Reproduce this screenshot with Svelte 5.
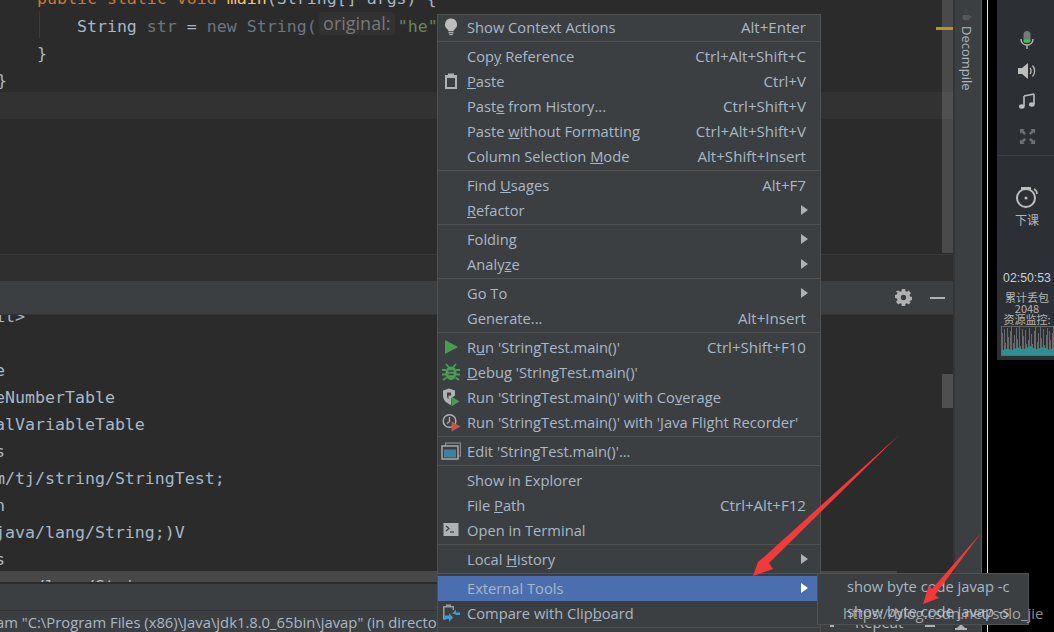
<script lang="ts">
  type Row = {
    label?: string;
    key?: number;
    shortcut?: string;
    icon?: string;
    more?: boolean;
    active?: boolean;
    sep?: boolean;
  };

  const rows: Row[] = [
    { label: "Show Context Actions", shortcut: "Alt+Enter", icon: "bulb" },
    { sep: true },
    { label: "Copy Reference", key: 3, shortcut: "Ctrl+Alt+Shift+C" },
    { label: "Paste", key: 0, shortcut: "Ctrl+V", icon: "clip" },
    { label: "Paste from History...", key: 4, shortcut: "Ctrl+Shift+V" },
    { label: "Paste without Formatting", key: 6, shortcut: "Ctrl+Alt+Shift+V" },
    { label: "Column Selection Mode", key: 17, shortcut: "Alt+Shift+Insert" },
    { sep: true },
    { label: "Find Usages", key: 5, shortcut: "Alt+F7" },
    { label: "Refactor", key: 0, more: true },
    { sep: true },
    { label: "Folding", more: true },
    { label: "Analyze", key: 5, more: true },
    { sep: true },
    { label: "Go To", more: true },
    { label: "Generate...", shortcut: "Alt+Insert" },
    { sep: true },
    { label: "Run 'StringTest.main()'", key: 1, shortcut: "Ctrl+Shift+F10", icon: "run" },
    { label: "Debug 'StringTest.main()'", key: 0, icon: "debug" },
    { label: "Run 'StringTest.main()' with Coverage", key: 31, icon: "cover" },
    { label: "Run 'StringTest.main()' with 'Java Flight Recorder'", icon: "flight" },
    { sep: true },
    { label: "Edit 'StringTest.main()'...", icon: "edit" },
    { sep: true },
    { label: "Show in Explorer" },
    { label: "File Path", key: 5, shortcut: "Ctrl+Alt+F12" },
    { label: "Open in Terminal", icon: "term" },
    { sep: true },
    { label: "Local History", key: 6, more: true },
    { sep: true },
    { label: "External Tools", more: true, active: true },
    { label: "Compare with Clipboard", key: 17, icon: "compare" },
    { sep: true }
  ];

  const consoleLines = [
    "e",
    "eNumberTable",
    "alVariableTable",
    "s",
    "m/tj/string/StringTest;",
    "n",
    "java/lang/String;)V",
    "s",
    "    /lang/Strin"
  ];

  const bars = [
    22, 26, 12, 27, 18, 24, 28, 12, 20, 27, 16, 28, 9, 26, 19, 25, 11, 15, 27, 21, 11, 24, 28, 13, 22, 28, 17, 26,
    10, 20, 27, 24, 15, 22, 28, 14
  ];
</script>

{#snippet icon(name: string)}
  <svg class="menu-icon" viewBox="0 0 20 20" width="20" height="20" aria-hidden="true">
    {#if name === "bulb"}
      <path d="M10 1.500a6 6 0 0 0-3.600 10.800c.7.6 1 1.200 1 1.900h5.200c0-.7.3-1.300 1-1.900A6 6 0 0 0 10 1.500z" fill="#bdbdbd" />
      <rect x="7.500" y="15" width="5" height="1.400" fill="#a8a8a8" />
      <rect x="8.200" y="17" width="3.600" height="1.200" fill="#a8a8a8" />
    {:else if name === "clip"}
      <path fill-rule="evenodd" d="M4 4h3V2.500h6V4h3v14H4zM6 7v9h8V7z" fill="#afb1b3" />
    {:else if name === "run"}
      <path d="M4 3l13 7-13 7z" fill="#499c54" />
    {:else if name === "debug"}
      <path d="M10 4.500c3.200 0 5.500 2.800 5.500 6.500s-2.300 7-5.500 7-5.500-3.300-5.500-7 2.300-6.500 5.500-6.500z" fill="#499c54" />
      <path d="M5 2l3 3.500M15 2l-3 3.500M1 8h4M19 8h-4M1 12.500h4M19 12.500h-4M2 18l3.500-2.500M18 18l-3.500-2.500" stroke="#499c54" stroke-width="1.800" fill="none" />
      <path d="M7.500 9h5M7.500 12.500h5" stroke="#3c3f41" stroke-width="1.400" />
    {:else if name === "cover"}
      <path d="M2 3.500l6-2 6 2v5l-4 3v6.500C5 16 2 13 2 8.500z" fill="#afb1b3" />
      <path d="M6 5.500h4v3H7.500v4C6 11 6 9 6 8z" fill="#3c3f41" />
      <path d="M10.500 9.500l8 5-8 5z" fill="#499c54" />
    {:else if name === "flight"}
      <circle cx="8.500" cy="9" r="6.300" fill="none" stroke="#afb1b3" stroke-width="1.500" />
      <path d="M8.500 5v4.500l-2.500 2" fill="none" stroke="#afb1b3" stroke-width="1.300" />
      <path d="M10.500 9.500l9 5-9 5z" fill="#c75450" />
    {:else if name === "edit"}
      <rect x="4.500" y="2" width="15" height="13" fill="none" stroke="#8c8e90" stroke-width="1.200" />
      <rect x="1" y="5" width="16" height="13" fill="#3c3f41" stroke="#afb1b3" stroke-width="1.400" />
      <rect x="3" y="8.500" width="12" height="8" fill="#40829e" />
    {:else if name === "term"}
      <rect x="2.500" y="3" width="15" height="13" fill="#afb1b3" />
      <path d="M5 6l3 2.500L5 11" fill="none" stroke="#3c3f41" stroke-width="1.200" />
      <path d="M9 12h4" stroke="#3c3f41" stroke-width="1.200" />
    {:else if name === "compare"}
      <path d="M2 3h3V1.500h5V3h3v4h-1.500V4.500h-8V15H5v1.500H2z" fill="#9a9c9e" />
      <path d="M19 9.500h-4V6.500l-4 4.500h3.500v1H19zM3.500 12.500H8V10l4 4.500-4 4.500v-3H3.500z" fill="#389fd6" />
    {/if}
  </svg>
{/snippet}

{#snippet caption(row: Row)}
  {#if row.key !== undefined}
    {row.label?.slice(0, row.key)}<u>{row.label?.[row.key]}</u>{row.label?.slice(row.key + 1)}
  {:else}
    {row.label}
  {/if}
{/snippet}

<div class="screen">
  <div class="ide">
    <div class="main">
      <div class="editor">
        <div class="caret-row"></div>
        <div class="guide"></div>
        <pre class="code"><span class="kw">    public static void </span><span class="fn">main</span>(String[] args) &#123;
        String <span class="dim">str</span> = <span class="dimblue">new String(</span><span class="hint">original:</span><span class="str">"he"</span>
    &#125;
&#125;</pre>
        <div class="editor-track"></div>
        <div class="warn-mark"></div>
      </div>
      <div class="tab-gap"></div>
      <div class="tool-header">
        <svg class="gear" viewBox="0 0 16 16" width="17" height="17" aria-hidden="true">
          <path fill-rule="evenodd" fill="#afb1b3" d="M6.500 0h3l.4 2.100 1.300.6L13 1.500 15 4l-1.300 1.700.4 1.300 1.900.6v2.800l-1.900.6-.4 1.300L15 12l-2 2.500-1.800-1.200-1.300.6L9.500 16h-3l-.4-2.100-1.300-.6L3 14.500 1 12l1.300-1.700-.4-1.300L0 8.400V5.600l1.900-.6.4-1.300L1 2l2-.5 1.800 1.200 1.300-.6zM8 5.500a2.500 2.500 0 1 0 0 5 2.500 2.500 0 0 0 0-5z" />
        </svg>
        <div class="minimize"></div>
      </div>
      <div class="console">
        <pre class="output">{consoleLines.join("\n")}</pre>
        <div class="console-top">it&gt;</div>
        <div class="console-thumb"></div>
        <div class="hscroll"></div>
      </div>
      <div class="blank-bar"></div>
      <div class="status">
        <span class="status-text">am "C:\Program Files (x86)\Java\jdk1.8.0_65bin\javap" (in directory</span>
        <span class="status-dot"></span>
        <span class="status-label">Repeat</span>
        <span class="status-bar"></span>
      </div>
    </div>
    <aside class="side-strip">
      <svg class="cup" viewBox="0 0 16 16" width="14" height="14" aria-hidden="true">
        <path d="M3 8h8v3.500c0 1.500-1 2.500-2.500 2.500h-3C4 14 3 13 3 11.500zM11 9h2v2.500h-2zM7.500 1c1 1.500-1.500 2.500 0 4.500-2.500-1.500 0-3 0-4.500z" fill="#55585a" />
      </svg>
      <span class="decompile">Decompile</span>
      <svg class="strip-mark" viewBox="0 0 12 6" width="12" height="6" aria-hidden="true">
        <path d="M6 0l4 4h2v2H0V4h2z" fill="#afb1b3" />
      </svg>
    </aside>
  </div>

  <div class="edge"></div>

  <div class="black">
    <div class="panel">
      <div class="panel-icons">
        <svg viewBox="0 0 20 20" width="20" height="20" aria-hidden="true">
          <rect x="6.500" y="1" width="7" height="12" rx="3.500" fill="#777" />
          <rect x="6.500" y="9.500" width="7" height="3" rx="1.500" fill="#2ecc40" />
          <path d="M4 9c0 8 12 8 12 0M10 15v4" fill="none" stroke="#b5b5b5" stroke-width="1.500" />
        </svg>
        <svg viewBox="0 0 20 20" width="20" height="20" aria-hidden="true">
          <path d="M1 7h4l6-5v16l-6-5H1z" fill="#bdbdbd" />
          <path d="M13 7c1.400 1.500 1.400 4.500 0 6M15.500 4.500c2.800 3 2.800 8 0 11" fill="none" stroke="#bdbdbd" stroke-width="1.300" />
        </svg>
        <svg class="note" viewBox="0 0 20 20" width="20" height="20" aria-hidden="true">
          <path d="M7 5v10M17 3v10M7 5l10-2" fill="none" stroke="#bdbdbd" stroke-width="1.600" />
          <ellipse cx="4.800" cy="15.500" rx="2.800" ry="2.200" fill="#bdbdbd" />
          <ellipse cx="14.800" cy="13.500" rx="2.800" ry="2.200" fill="#bdbdbd" />
        </svg>
        <svg class="expand" viewBox="0 0 20 20" width="19" height="19" aria-hidden="true">
          <rect x="2" y="2" width="16" height="16" fill="#2c2f34" />
          <path d="M2 2h5L5.500 3.500 8.500 6.500 6.500 8.500 3.500 5.500 2 7zM18 2v5L16.500 5.500 13.500 8.500 11.500 6.500 14.500 3.500 13 2zM2 18v-5L3.500 14.500 6.500 11.500 8.500 13.500 5.500 16.500 7 18zM18 18h-5L14.500 16.500 11.500 13.500 13.500 11.500 16.500 14.500 18 13z" fill="#6d6f72" />
        </svg>
      </div>
      <div class="panel-rule"></div>
      <svg class="bell" viewBox="0 0 24 24" width="24" height="24" aria-hidden="true">
        <circle cx="11" cy="13" r="9" fill="none" stroke="#bdbdbd" stroke-width="2" />
        <path d="M6 5V2h10v3z" fill="#bdbdbd" />
        <path d="M19 4c2 1 3 3 3 5" fill="none" stroke="#bdbdbd" stroke-width="1.500" />
        <circle cx="11" cy="13" r="1.500" fill="#bdbdbd" />
      </svg>
      <div class="leave">下课</div>
      <div class="clock">02:50:53</div>
      <div class="stat">累计丢包</div>
      <div class="stat">2048</div>
      <div class="stat">资源监控:</div>
      <div class="chart">
        {#each bars as h, i}
          <i class="bar" style="height: {h}px; left: {i * 1.5}px"></i>
        {/each}
        <div class="chart-fill"></div>
      </div>
    </div>
  </div>

  <div class="menu">
    {#each rows as row}
      {#if row.sep}
        <div class="sep"></div>
      {:else}
        <div class="item" class:active={row.active}>
          {#if row.icon}{@render icon(row.icon)}{/if}
          <span class="caption">{@render caption(row)}</span>
          {#if row.shortcut}<span class="shortcut">{row.shortcut}</span>{/if}
          {#if row.more}<span class="more"></span>{/if}
        </div>
      {/if}
    {/each}
  </div>

  <div class="submenu">
    <div class="sub-item">show byte code javap -c</div>
    <div class="sub-item">show byte code javap -s</div>
  </div>
  <div class="watermark">https://blog.csdn.net/solo_jie</div>

  <svg class="arrows" viewBox="0 0 1054 632" width="1054" height="632" aria-hidden="true">
    <path d="M899 435 L769 563 L773 569 L753 576 L758 562 L764 557 Z" fill="#f33a3a" />
    <path d="M981 533 L935 595 L939 598 L923 604 L929 585 L932 589 Z" fill="#f33a3a" />
  </svg>
</div>

<style>
  :global(body) {
    margin: 0;
    background: #000;
  }

  .screen {
    display: flex;
    position: relative;
    width: 1054px;
    height: 632px;
    overflow: hidden;
    background: #000;
    font-family: "Open Sans", "Noto Sans", sans-serif;
  }

  .ide {
    display: flex;
    flex: none;
    width: 982px;
    height: 632px;
  }

  .main {
    display: flex;
    flex: none;
    flex-direction: column;
    width: 953px;
    background: #2b2b2b;
  }

  .editor {
    position: relative;
    flex: none;
    height: 254px;
    overflow: hidden;
  }

  .caret-row {
    position: absolute;
    top: 92px;
    right: 0;
    left: 0;
    height: 27px;
    background: #323232;
  }

  .guide {
    position: absolute;
    top: 11px;
    left: 39px;
    width: 1px;
    height: 27px;
    background: #3b3b3b;
  }

  .code,
  .output {
    position: relative;
    margin: 0;
    color: #a9b7c6;
    font-family: "DejaVu Sans Mono", monospace;
    font-size: 16.6px;
    line-height: 27px;
  }

  .code {
    margin: -15px 0 0 -3px;
  }

  .kw { color: #cc7832; }
  .fn { color: #ffc66d; }
  .dim { color: #72767a; }
  .dimblue { color: #6c7782; }
  .str { color: #6a8759; }

  .hint {
    display: inline-block;
    width: 76px;
    height: 23px;
    margin: 0 3px 0 2px;
    border-radius: 4px;
    background: #323232;
    color: #787878;
    font-family: "Open Sans", sans-serif;
    font-size: 18px;
    line-height: 22px;
    text-align: center;
    vertical-align: 2px;
  }

  .editor-track {
    position: absolute;
    top: 0;
    right: 0;
    width: 11px;
    height: 253px;
    background: rgba(255, 255, 255, 0.15);
  }

  .warn-mark {
    position: absolute;
    top: 27px;
    right: 0;
    width: 17px;
    height: 3px;
    background: #b8922d;
  }

  .tab-gap {
    flex: none;
    height: 27px;
    border-top: 1px solid #383838;
    box-sizing: border-box;
    background: #2f2f2f;
  }

  .tool-header {
    display: flex;
    flex: none;
    align-items: center;
    justify-content: flex-end;
    gap: 18px;
    box-sizing: border-box;
    height: 34px;
    padding-right: 8px;
    border-bottom: 1px solid #323436;
    background: #3c3f41;
  }

  .minimize {
    width: 15px;
    height: 2px;
    background: #afb1b3;
  }

  .console {
    position: relative;
    flex: none;
    height: 267px;
    overflow: hidden;
  }

  .output {
    margin: 42px 0 0 -5px;
    color: #a9b7c6;
  }

  .console-top {
    position: absolute;
    top: -12px;
    left: -5px;
    color: #a9b7c6;
    font-family: "DejaVu Sans Mono", monospace;
    font-size: 16.6px;
    line-height: 27px;
  }

  .console-thumb {
    position: absolute;
    top: 59px;
    right: 0;
    width: 11px;
    height: 34px;
    background: #4f4f4f;
  }

  .hscroll {
    position: absolute;
    bottom: 0;
    left: 0;
    width: 897px;
    height: 11px;
    background: rgba(255, 255, 255, 0.14);
  }

  .blank-bar {
    flex: none;
    height: 29px;
    box-sizing: border-box;
    border-top: 2px solid #2b2b2b;
    border-bottom: 1px solid #323436;
    background: #3c3f41;
  }

  .status {
    display: flex;
    flex: none;
    align-items: center;
    height: 21px;
    overflow: hidden;
    background: #3c3f41;
    color: #a9b7c6;
    font-size: 14.8px;
    line-height: 22px;
    white-space: nowrap;
  }

  .status-text {
    flex: none;
    width: 828px;
    margin-left: -4px;
    overflow: hidden;
  }

  .status-dot {
    flex: none;
    width: 4px;
    height: 2px;
    margin: 8px 0 0 6px;
    background: #afb1b3;
  }

  .status-label {
    flex: none;
    width: 48px;
    margin-left: 21px;
  }

  .status-bar {
    flex: none;
    width: 10px;
    height: 2px;
    margin: 8px 0 0 22px;
    background: #afb1b3;
  }

  .side-strip {
    position: relative;
    flex: none;
    width: 29px;
    box-sizing: border-box;
    border-left: 2px solid #333537;
    border-right: 1px solid #5a5c5e;
    background: #3c3f41;
  }

  .cup {
    position: absolute;
    top: 8px;
    left: 5px;
  }

  .decompile {
    position: absolute;
    top: 26px;
    left: 3px;
    color: #a9b7c6;
    font-size: 13px;
    writing-mode: vertical-rl;
  }

  .strip-mark {
    position: absolute;
    bottom: 2px;
    left: 0;
  }

  .edge {
    flex: none;
    width: 6px;
    height: 632px;
    box-sizing: border-box;
    border-right: 1px solid #e8e8e8;
    background: #000;
  }

  .black {
    flex: 1;
    padding-left: 9px;
  }

  .panel {
    display: flex;
    flex-direction: column;
    align-items: center;
    box-sizing: border-box;
    height: 360px;
    padding-left: 3px;
    background: #2c2f34;
    color: #b5b5b5;
  }

  .panel-icons {
    display: flex;
    flex-direction: column;
    align-items: center;
    height: 125px;
    padding-top: 30px;
    gap: 11px;
  }

  .note {
    margin-top: -1px;
  }

  .expand {
    margin-top: 5px;
  }

  .panel-rule {
    width: calc(100% + 3px);
    height: 1px;
    margin-left: -3px;
    background: #3b3e43;
  }

  .bell {
    margin-top: 29px;
  }

  .leave {
    margin-top: 2px;
    font-family: "Noto Sans CJK SC", sans-serif;
    font-size: 12px;
    line-height: 17px;
  }

  .clock {
    margin-top: 42px;
    color: #c4d0dc;
    font-family: "Liberation Sans", sans-serif;
    font-size: 12.3px;
    line-height: 16px;
  }

  .stat {
    font-family: "Noto Sans CJK SC", "Liberation Sans", sans-serif;
    font-size: 11px;
    line-height: 11px;
  }

  .stat:last-of-type {
    margin-top: 1px;
  }

  .clock + .stat {
    margin-top: 6px;
  }

  .chart {
    position: relative;
    flex: none;
    align-self: flex-start;
    box-sizing: border-box;
    width: 53px;
    height: 30px;
    margin: 1px 0 0 1px;
    overflow: hidden;
    border: 1px solid #6a6a6a;
    border-right: none;
  }

  .bar {
    position: absolute;
    bottom: 0;
    width: 1px;
    background: #6a6a6a;
  }

  .chart-fill {
    position: absolute;
    right: 0;
    bottom: 0;
    left: 0;
    height: 9px;
    background: #2f9090;
    clip-path: polygon(0 50%, 10% 30%, 20% 45%, 30% 15%, 40% 40%, 55% 0, 65% 35%, 80% 10%, 90% 40%, 100% 25%, 100% 100%, 0 100%);
  }

  .menu {
    position: absolute;
    top: 14px;
    left: 437px;
    box-sizing: border-box;
    width: 384px;
    height: 620px;
    border: 1px solid #515151;
    background: #3c3f41;
    color: #a9b7c6;
    font-size: 14.7px;
  }

  .item {
    display: flex;
    position: relative;
    align-items: center;
    box-sizing: border-box;
    height: 25px;
    padding: 0 14px 2px 29px;
    white-space: nowrap;
  }

  .item.active {
    background: #4b6eaf;
  }

  .caption {
    flex: 1;
  }

  .menu-icon {
    position: absolute;
    top: 2px;
    left: 3px;
  }

  .shortcut {
    flex: none;
    font-size: 15.1px;
  }

  .more {
    width: 0;
    height: 0;
    margin-right: -2px;
    border-top: 5px solid transparent;
    border-bottom: 5px solid transparent;
    border-left: 7px solid #afb1b3;
  }

  .item.active .more {
    border-left-color: #fff;
  }

  .sep {
    box-sizing: border-box;
    height: 4px;
    padding-top: 1px;
    background: #515151 content-box;
    background-clip: content-box;
    border-bottom: 2px solid #3c3f41;
  }

  .submenu {
    position: absolute;
    top: 573px;
    left: 817px;
    box-sizing: border-box;
    width: 212px;
    height: 52px;
    padding-top: 1px;
    border: 1px solid #515151;
    background: #3c3f41;
    color: #a9b7c6;
    font-size: 14.7px;
  }

  .sub-item {
    height: 25px;
    padding-left: 29px;
    line-height: 22px;
  }

  .watermark {
    position: absolute;
    top: 603px;
    left: 843px;
    color: rgba(210, 210, 210, 0.7);
    font-size: 14.9px;
    line-height: 20px;
  }

  .arrows {
    position: absolute;
    top: 0;
    left: 0;
    pointer-events: none;
  }
</style>
